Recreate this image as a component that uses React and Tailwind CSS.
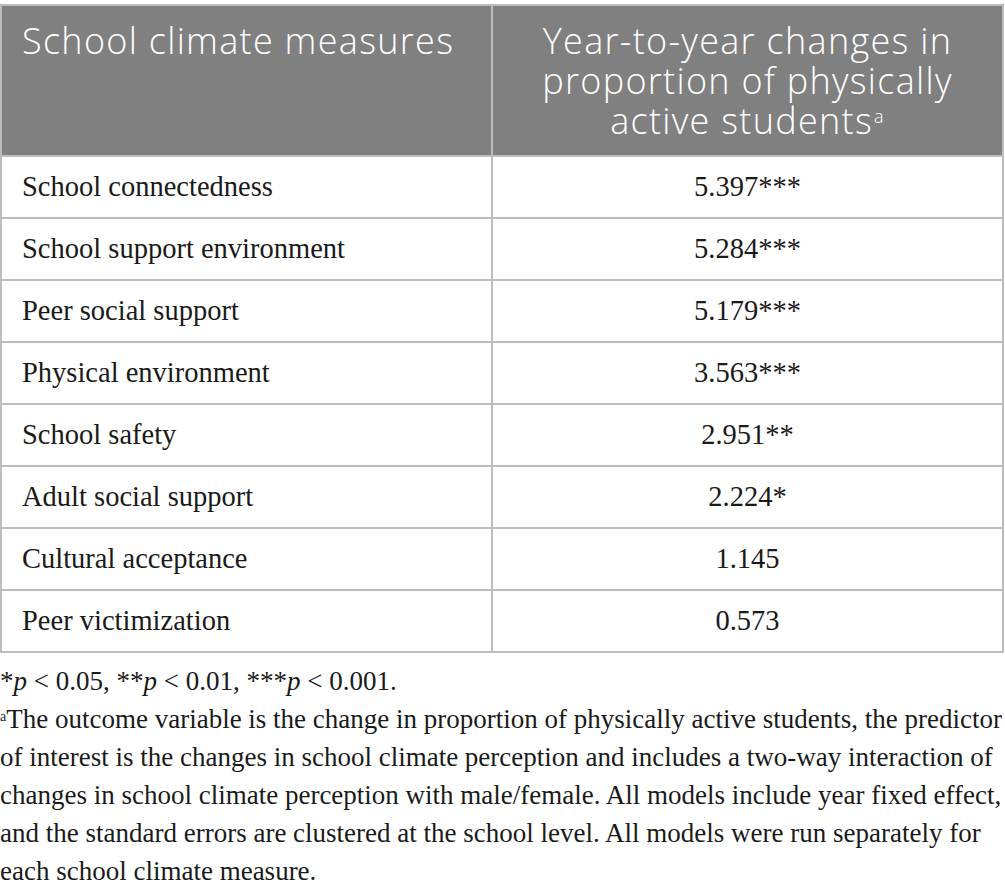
import React from 'react';

const ROWS = [
  ['School connectedness', '5.397***'],
  ['School support environment', '5.284***'],
  ['Peer social support', '5.179***'],
  ['Physical environment', '3.563***'],
  ['School safety', '2.951**'],
  ['Adult social support', '2.224*'],
  ['Cultural acceptance', '1.145'],
  ['Peer victimization', '0.573'],
];

const serif = { fontFamily: '"Liberation Serif", "Times New Roman", serif' };

export default function App() {
  return (
    <div className="w-[1005px] min-h-[891px] bg-white pt-[4px]">
      <table className="w-[1004px] border-collapse table-fixed">
        <colgroup>
          <col className="w-[491px]" />
          <col />
        </colgroup>
        <thead>
          <tr className="bg-[#808080] text-white font-['Open_Sans',sans-serif] text-[36px] leading-[40px] tracking-[1.3px]">
            <th className="h-[151px] border-2 border-[#bdbdbd] px-[20px] pt-[15px] text-left align-top font-light">
              School climate measures
            </th>
            <th className="h-[151px] border-2 border-[#bdbdbd] px-[10px] pt-[15px] text-center align-top font-light whitespace-nowrap">
              Year-to-year changes in
              <br />
              proportion of physically
              <br />
              active students<span className="inline-block align-top text-[18px] leading-[18px] ml-[1px] mt-[6px]">a</span>
            </th>
          </tr>
        </thead>
        <tbody style={serif} className="text-[28.5px] text-[#1a1a1a]">
          {ROWS.map(([name, val]) => (
            <tr key={name}>
              <td className="h-[62px] border-2 border-[#bdbdbd] px-[20px] align-middle">{name}</td>
              <td className="h-[62px] border-2 border-[#bdbdbd] px-[20px] text-center align-middle">{val}</td>
            </tr>
          ))}
        </tbody>
      </table>

      <div style={serif} className="pt-[9px] text-[27px] leading-[38px] text-[#1a1a1a] whitespace-nowrap">
        <p>
          *<i>p</i> &lt; 0.05, **<i>p</i> &lt; 0.01, ***<i>p</i> &lt; 0.001.
        </p>
        <p>
          <sup className="text-[14px]">a</sup>The outcome variable is the change in proportion of physically active students, the predictor
          <br />
          of interest is the changes in school climate perception and includes a two-way interaction of
          <br />
          changes in school climate perception with male/female. All models include year fixed effect,
          <br />
          and the standard errors are clustered at the school level. All models were run separately for
          <br />
          each school climate measure.
        </p>
      </div>
    </div>
  );
}
